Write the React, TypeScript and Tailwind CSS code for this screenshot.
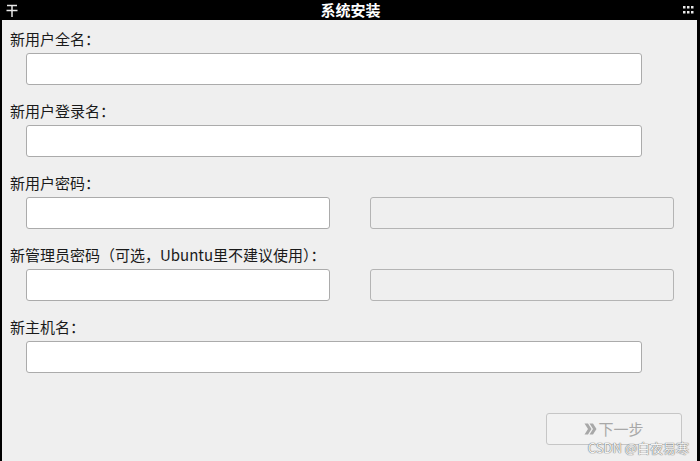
const font = { fontFamily: '"Noto Sans CJK SC", "Noto Sans", sans-serif' };

function Field({ label, split }: { label: string; split?: boolean }) {
  return (
    <div className="flex flex-col mb-[16px]">
      <div className="h-[20px] leading-[20px] text-[15px] text-[#1a1a1a]">{label}</div>
      {split ? (
        <div className="flex mt-[4px] ml-[16px] gap-[40px]">
          <input className="w-[304px] h-[32px] bg-white border border-[#ababab] rounded-[3px] outline-none" />
          <input
            disabled
            className="w-[304px] h-[32px] bg-[#efefef] border border-[#b4b4b4] rounded-[3px] outline-none"
          />
        </div>
      ) : (
        <input className="mt-[4px] ml-[16px] w-[616px] h-[32px] bg-white border border-[#ababab] rounded-[3px] outline-none" />
      )}
    </div>
  );
}

export default function App() {
  return (
    <div className="w-[700px] h-[461px] bg-black flex flex-col overflow-hidden" style={font}>
      <div className="h-[20px] flex items-center justify-between px-[6px] text-white">
        <svg width="12" height="13" viewBox="0 0 12 13">
          <path d="M1 1.5h10M0.5 6.5h11M6 2v11" stroke="#e8e8e8" strokeWidth="1.5" fill="none" />
        </svg>
        <span className="text-[15px] font-bold leading-[20px]">系统安装</span>
        <svg width="11" height="8" viewBox="0 0 11 8">
          <rect x="0" y="0" width="2.5" height="2.5" fill="#e8e8e8" />
          <rect x="4" y="0" width="2.5" height="2.5" fill="#e8e8e8" />
          <rect x="8" y="0" width="2.5" height="2.5" fill="#e8e8e8" />
          <rect x="0" y="5" width="2.5" height="2.5" fill="#e8e8e8" />
          <rect x="4" y="5" width="2.5" height="2.5" fill="#e8e8e8" />
          <rect x="8" y="5" width="2.5" height="2.5" fill="#e8e8e8" />
        </svg>
      </div>
      <div className="flex-1 bg-[#efefef] ml-[2px] mr-[3px] pl-[8px] pt-[9px] relative flex flex-col">
        <Field label="新用户全名：" />
        <Field label="新用户登录名：" />
        <Field label="新用户密码：" split />
        <Field label="新管理员密码（可选，Ubuntu里不建议使用）：" split />
        <Field label="新主机名：" />
        <div className="flex justify-end mr-[15px] mt-[24px]">
          <button
            disabled
            className="w-[136px] h-[32px] border border-[#c6c6c6] rounded-[3px] bg-[#f2f2f2] flex items-center justify-center text-[15px] text-[#a8a8a8]"
          >
            <svg width="13" height="12" viewBox="0 0 13 12" className="mr-[1px]">
              <path d="M0.5 0.5L4 0.5L7.5 6L4 11.5L0.5 11.5L4 6Z" fill="#a8a8a8" />
              <path d="M5.5 0.5L9 0.5L12.5 6L9 11.5L5.5 11.5L9 6Z" fill="#a8a8a8" />
            </svg>
            <span>下一步</span>
          </button>
        </div>
        <div
          className="absolute right-[8px] bottom-[7px] text-[13px] text-[#f4f4f4] leading-none"
          style={{ textShadow: '0 0 1px #666, 0 0 1px #666' }}
        >
          CSDN @白夜易寒
        </div>
      </div>
    </div>
  );
}
